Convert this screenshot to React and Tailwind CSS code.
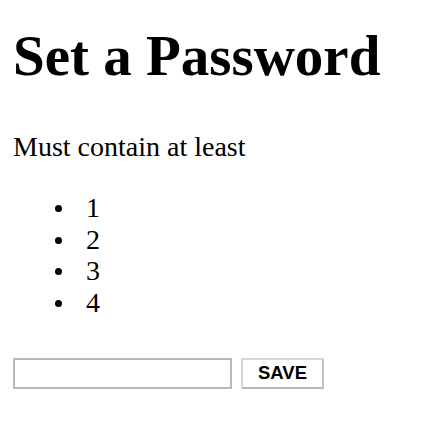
export default function App() {
    const items = ['1', '2', '3', '4'];

    return (
        <div className="min-h-[440px] bg-white text-black font-['Liberation_Serif','Times_New_Roman',serif] px-[13px]">
            <h1 className="pt-[24px] text-[57px] font-bold leading-[63px]">Set a Password</h1>
            <p className="mt-[44px] text-[28px] leading-[31px]">Must contain at least</p>
            <ul className="mt-[30px] text-[28px] leading-[31.5px]">
                {items.map((n) => (
                    <li key={n} className="flex items-center">
                        <span className="ml-[42px] mr-[24px] mt-[2px] w-[7px] h-[7px] rounded-full bg-black" />
                        <span>{n}</span>
                    </li>
                ))}
            </ul>
            <div className="mt-[40px] flex items-start gap-[9px]">
                <input type="password" className="w-[219px] h-[31px] border-2 border-[#b9b9b9] bg-white outline-none" />
                <button className="w-[83px] h-[31px] border-2 border-[#d4d8db] border-b-[#b7b7b7] border-r-[#c4c4c4] bg-white font-['Liberation_Sans',Arial,sans-serif] font-bold text-[18.5px] leading-none text-black">
                    SAVE
                </button>
            </div>
        </div>
    );
}
